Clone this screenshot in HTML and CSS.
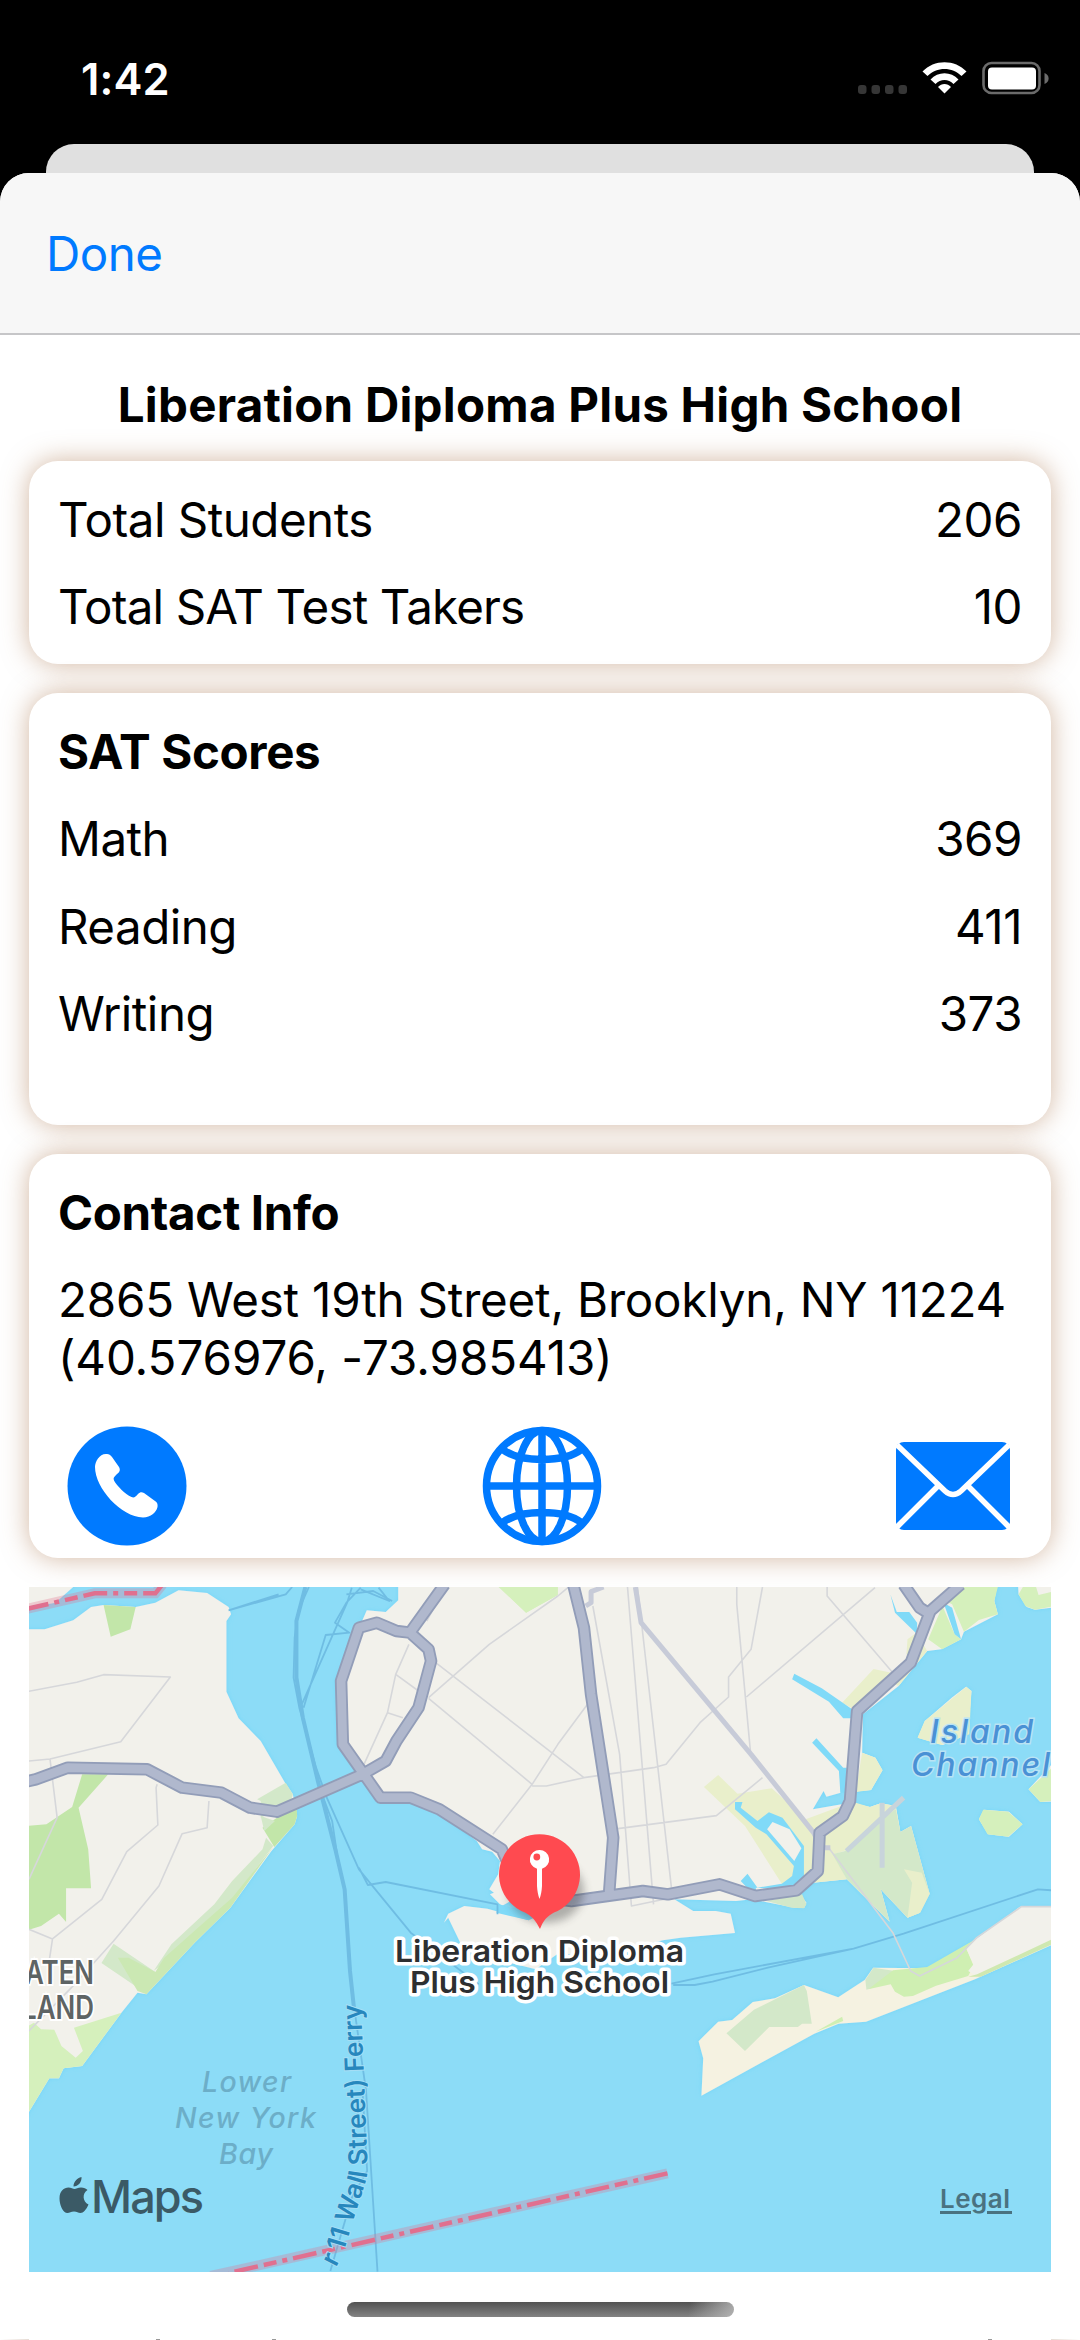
FILE: index.html
```html
<!DOCTYPE html>
<html lang="en">
<head>
<meta charset="utf-8">
<title>Liberation Diploma Plus High School</title>
<link rel="stylesheet" href="styles.css">
</head>
<body>
<div class="screen">
  <header class="status">
    <span class="time">1:42</span>
    <svg class="indicators" width="192" height="36" viewBox="0 0 192 36">
      <g fill="#363636"><rect x="0" y="24" width="8.500" height="9" rx="3"/><rect x="13.500" y="24" width="8.500" height="9" rx="3"/><rect x="27" y="24" width="8.500" height="9" rx="3"/><rect x="40.500" y="24" width="8.500" height="9" rx="3"/></g>
      <g fill="#fff">
        <path d="M64.500 10.500C76-2 97-2 108.500 10.500L103.500 15C94.500 5.500 78.500 5.500 69.500 15Z"/>
        <path d="M72.500 18.500C80 10 93 10 100.500 18.500L95.500 23C90.500 17.500 82.500 17.500 77.500 23Z"/>
        <path d="M80 26C83.500 22 89.500 22 93 26L86.500 32.500Z"/>
      </g>
      <rect x="125.500" y="2" width="56" height="30" rx="8" fill="none" stroke="#6b6b6b" stroke-width="2.600"/>
      <rect x="130" y="6.500" width="48" height="22" rx="4" fill="#fff"/>
      <path d="M186.500 12C192 14 192 21 186.500 23Z" fill="#6b6b6b"/>
    </svg>
  </header>
  <div class="sheet-behind"></div>
  <main class="sheet">
    <nav class="toolbar"><a class="done">Done</a></nav>
    <h1 class="title">Liberation Diploma Plus High School</h1>
    <div class="stack">
      <section class="card">
        <div class="row"><span>Total Students</span><span>206</span></div>
        <div class="row"><span class="takers">Total SAT Test Takers</span><span>10</span></div>
      </section>
      <section class="card scores">
        <h2 class="heading">SAT Scores</h2>
        <div class="row"><span>Math</span><span>369</span></div>
        <div class="row"><span>Reading</span><span>411</span></div>
        <div class="row"><span>Writing</span><span>373</span></div>
      </section>
      <section class="card contact">
        <h2 class="heading">Contact Info</h2>
        <p class="address">2865 West 19th Street, Brooklyn, NY 11224<br><span class="coords">(40.576976, -73.985413)</span></p>
        <div class="actions">
          <svg width="120" height="120" viewBox="0 0 120 120"><circle cx="60" cy="60" r="59.500" fill="#007aff"/><path fill="#fff" d="M40 28C33 27 28 35 28 41C28 62 54 91 76 91.500C84 91 89 87 90.500 81C91 78 90 76 88 75L77 67C74.500 65.500 73 66 71 68C68.500 71 67 72 64.500 71C58 68 50 60 47 54.500C46 52 47 51 49.500 48.500C53 46 53.500 44 52 41L45 31C43.500 29 42 28 40 28Z"/></svg>
          <svg width="120" height="120" viewBox="0 0 120 120" fill="none" stroke="#007aff" stroke-width="7.500"><circle cx="60" cy="60" r="55.500"/><ellipse cx="60" cy="60" rx="25.500" ry="55.500"/><path d="M60 4V116M4 60H116M20 23C38 37 82 37 100 23M20 97C38 83 82 83 100 97"/></svg>
          <svg class="mail" width="114" height="88" viewBox="0 0 114 88"><rect width="114" height="88" rx="8" fill="#007aff"/><path d="M1 3L49 49Q57 56 65 49L113 3M42 44L1 85M72 44L113 85" fill="none" stroke="#fff" stroke-width="5.500"/></svg>
        </div>
      </section>
      <svg class="map" width="1022" height="685" viewBox="29 1586 1022 685">
        <defs>
          <filter id="shore" x="-5%" y="-5%" width="110%" height="110%"><feDropShadow dx="0" dy="0" stdDeviation="7" flood-color="#70d6f8" flood-opacity=".9"/></filter>
          <filter id="soft" x="-30%" y="-30%" width="160%" height="160%"><feGaussianBlur stdDeviation="4"/></filter>
          <path id="ferry" d="M303 2330L343 2253L353 2220L365 2183Q368 2174 367.500 2165L361 2003"/>
        </defs>
        <rect x="29" y="1586" width="1022" height="685" fill="#8cdcf7"/>
        <g transform="translate(0 1570) scale(.35714 .33333)" class="geo">
          <g class="land" filter="url(#shore)">
            <path d="M60 175H125L205 148 255 108 290 102 380 108 435 95 500 58 580 66 640 108 647 130 634 150V362L668 442 730 510 798 635 820 670 832 735 825 760 760 840 645 1010 545 1115 410 1270 385 1265 340 1325 230 1485 178 1492 165 1522H138L60 1660Z"/>
            <path d="M60 30H205V48L155 95 60 115Z"/>
            <path d="M1115 30V88L1080 123 1027 118 1010 160 940 330 945 520 1010 610 1060 690H1150L1230 725 1335 810 1350 835 1378 842 1400 870 1395 910 1370 955 1383 965 1372 970 1405 1005 1430 990 1480 1020 1480 1048 1365 1013 1300 1005 1255 1028 1243 1055 1255 1040 1300 1140 1500 1195 1560 1150 1700 1150 1856 1108 1906 1100 2058 1086 2046 1028 2004 1020H1941L1888 985 2061 990 2106 985 2226 1010H2252L2258 995 2240 970 2276 935 2371 925 2491 1052 2466 955 2541 1040 2576 1025 2603 968 2551 765 2521 783 2508 705 2466 697 2436 708 2381 695 2276 715 2306 660 2314 677 2354 665 2351 600 2366 595 2380 663 2439 657 2471 598 2451 560 2414 545 2416 430 2516 345 2596 240 2636 235 2691 205 2699 182 2794 130 2784 90 2794 30Z"/>
            <path d="M2850 30L2852 70 2875 108 2898 116 2965 107V30ZM2570 500L2590 450 2665 380 2705 347 2720 360 2710 490 2640 522ZM2880 655L2980 540V690L2913 693ZM2755 716L2825 722 2863 760 2825 797 2767 790 2741 745Z"/>
            <path class="beach" d="M1956 1411L2011 1352 2050 1347 2108 1293 2170 1282 2251 1242 2347 1279 2421 1227 2445 1190 2595 1192 2735 1105 2860 1007H2970V1110L2730 1225 2425 1352 2348 1358 2280 1388 1964 1574 1969 1462Z"/>
          </g>
          <g fill="#c2e6a9">
            <path d="M290 102L380 108 365 175 310 197ZM230 610H303L220 710 247 835 255 952H185V1053L165 1028 115 1065 70 1080V765L130 760 202 708ZM735 770L830 700 832 735 825 760 768 828Z"/>
          </g>
          <g fill="#d3e8c9"><path d="M720 685L800 635 820 670 812 700 730 740V690M730 735L770 750 740 780M745 800L765 825 640 1000 540 1110 430 1200 480 1120 600 1000 650 930 735 835ZM318 1118L435 1203 411 1268 284 1176Z"/></g>
          <path fill="#cbe8b3" d="M765 828L645 1010 545 1115 410 1270 385 1260 330 1160 360 1160 435 1203 460 1160 560 1065 650 980Z"/>
          <path fill="#d5f0bc" d="M70 1370L95 1355 115 1375 152 1376 172 1425 212 1460 232 1440 207 1370 340 1325 230 1485 178 1492 165 1522H138L60 1660ZM1398 48H1562V72L1473 125Z"/>
          <g transform="translate(1456 0)">
            <path fill="#d5f0bc" d="M-60 48H105V72L17 125ZM1190 90L1240 48H1338L1328 90 1338 130 1285 147 1243 182 1210 100ZM1183 105L1217 190 1235 205 1182 235 1143 205ZM1396 70L1408 48H1445L1452 72 1490 62V107L1442 116 1415 105ZM1297 716L1367 722 1407 760 1367 797 1309 790 1285 745ZM1424 655L1490 590V690L1457 693Z"/>
            <path fill="#e9efcb" d="M990 294L1040 305 930 412 902 395ZM1110 185L1140 240 1060 345 1050 340 1100 270 1082 250 1085 205ZM958 545L995 560 1015 598 983 657 940 663ZM1113 500L1133 450 1250 347 1264 360 1258 490 1180 522ZM555 612L609 668 705 652 800 745 900 705 940 695 980 708 1010 697 1052 705 1065 783 880 850 915 925 820 935 733 938 630 765 515 648Z"/>
            <path fill="#d3e8c9" d="M875 850L910 840 1020 740 1052 715 1065 783 1095 765 1147 968 1120 1025 1085 1040 1010 955 1035 1052 915 925ZM690 990L790 970 802 1000 795 1012 760 1010Z"/>
            <path fill="#e9efcb" d="M1075 895L1125 905 1147 968 1120 1025 1085 1040 1098 935Z"/>
            <path fill="#80daf8" d="M1037 70L1055 123H1090L1112 155V190L1050 125ZM768 308L845 352 930 415V442H905L865 392 762 325ZM830 502L905 590H915V665H897L893 600 818 515ZM602 693H623L618 710 665 750 697 724 735 740 795 825V915L770 960 660 950 665 983 618 930 637 908 665 950 733 938 762 915 767 885 690 790 660 770 602 715ZM1186 95L1210 110 1235 205 1217 190Z"/>
            <path fill="#f2f1eb" d="M707 753L755 775 788 832 768 870 692 775Z"/>
            <g fill="#d3e8c9"><path d="M578 1387L655 1316 795 1242 803 1260 817 1358H790L778 1368H698L630 1440Z"/><path d="M967 1226L990 1190 1050 1200 1045 1230 970 1256Z"/></g>
            <path fill="#cfefb2" d="M1045 1198L1140 1188 1278 1103 1278 1110 1250 1133 1270 1184 1255 1215 1165 1244 1100 1275 1075 1277 1050 1262 1038 1240 975 1255ZM828 1382L902 1337 905 1350Z"/>
            <path fill="#f2f1eb" d="M1278 1103L1400 1007H1490V1112L1280 1216 1255 1200 1270 1180 1250 1133Z"/>
            <path fill="#cfe8b0" d="M1255 1217L1280 1210 1490 1105V1120L1290 1217Z"/>
          </g>
          <path fill="#80daf8" d="M1398 1000L1440 1012 1480 1030 1560 1000V1010L1480 1048 1390 1025Z"/>
          <g class="ferry">
            <path d="M640 118L800 70 818 48M640 118L780 70M848 440L890 630 940 840 965 955 985 1260 1025 1560 1057 2102M865 48L835 120 825 200 822 320 838 410 885 590 915 680 1005 895 1150 1085 1340 1240M985 50L972 95 845 400M1010 50L970 95 938 155 978 185 912 192 850 410M1010 55L1090 90 1060 50M970 70L1045 60 1098 90M905 680L930 750 948 880M1005 890L1030 942 1080 933 1393 1000V1030M925 2100L985 1880 1028 1800 1015 1560"/>
            <path class="wide" d="M855 48L830 150V320L848 440 890 630 940 840 965 955 980 1200 992 1320"/>
            <path d="M1880 1238L2000 1210 2390 1133 2530 1088 2906 955 2945 958M1885 1242H1945L1995 1232 2150 1190 2390 1133"/>
          </g>
          <g class="minor">
            <path d="M81 361L215 334 290 311 477 318 338 512 140 564 81 570M140 564L160 740 81 925M440 640L437 650 442 762 355 842 285 985 147 1104 81 1075M147 1104L135 1190M585 690L580 770 510 788 445 945 318 1110 200 1250 81 1380M1225 90L1195 150M1145 220L1108 310 1085 425 1015 590M1108 310L1172 360M1085 425L1128 440M1200 380L1370 220 1562 75 1590 50M1220 275L1635 620 1830 590 1865 580 1960 455 2040 378V318L2103 235 2135 48M1200 382L1490 640 1380 790M1490 645H1530L1635 620M1490 640L1562 520 1645 400M1757 48L1830 1000M1660 105L1735 550 1768 1005 1880 980M1785 48L1880 950M2063 48V100L2102 550M2090 378L2450 50M2316 48V75L2500 305M1730 773L2006 734 2135 620M2320 830L2500 1085 2550 1200 2575 1215 2680 1160 2735 1100 2860 1007H2943"/>
          </g>
          <path class="thin" d="M1640 105L1655 95V62L1690 48M1779 48L1795 155 2103 550 2278 785 2300 830 2325 830"/>
          <path fill="none" stroke="#c8d4db" stroke-width="5" d="M2470 695V890M2530 680L2370 840"/>
          <g class="road casing">
            <path d="M60 635L100 625 190 590 412 595 510 650 620 665 700 710 775 722 1015 610 1080 570 1110 510 1172 410 1207 270 1200 235 1148 185 1110 180 1055 155 1005 170 955 330 960 520 1065 680H1150L1230 715 1405 835 1460 970 1600 990 1800 960 1870 970 2015 940 2115 975 2230 958 2290 900 2295 785 2360 735 2380 690 2400 420 2550 275 2605 120 2690 40M1148 185L1245 40M1605 40L1635 170 1655 370 1717 800 1705 975M2530 40L2575 110 2605 130"/>
          </g>
          <g class="road fill"><path d="M60 635L100 625 190 590 412 595 510 650 620 665 700 710 775 722 1015 610 1080 570 1110 510 1172 410 1207 270 1200 235 1148 185 1110 180 1055 155 1005 170 955 330 960 520 1065 680H1150L1230 715 1405 835 1460 970 1600 990 1800 960 1870 970 2015 940 2115 975 2230 958 2290 900 2295 785 2360 735 2380 690 2400 420 2550 275 2605 120 2690 40M1148 185L1245 40M1605 40L1635 170 1655 370 1717 800 1705 975M2530 40L2575 110 2605 130"/></g>
          <g fill="none" stroke="#e0708f">
            <path stroke-opacity=".3" stroke-width="10" d="M70 115L265 67H435L455 40M590 2115L1869 1807"/>
            <path stroke-width="4.500" stroke-dasharray="24 6 5 6 13 6" d="M70 115L265 67H435L455 40M1869 1807L640 2106"/>
          </g>
        </g>
        <g class="water-name strong">
          <text x="930" y="1742" textLength="103">Island</text>
          <text x="911" y="1775" textLength="139">Channel</text>
        </g>
        <g class="district">
          <text x="25" y="1983" textLength="69" lengthAdjust="spacingAndGlyphs">ATEN</text>
          <text x="22" y="2018" textLength="72" lengthAdjust="spacingAndGlyphs">LAND</text>
        </g>
        <g class="water-name faint">
          <text x="202" y="2091" textLength="89">Lower</text>
          <text x="175" y="2127" textLength="141">New York</text>
          <text x="219" y="2163" textLength="54">Bay</text>
        </g>
        <text class="ferry-name"><textPath href="#ferry" startOffset="100%" text-anchor="end">r 11 Wall Street) Ferry</textPath></text>
        <ellipse cx="546" cy="1890" rx="38" ry="32" fill="#333" opacity=".35" filter="url(#soft)"/>
        <path fill="#ff4a50" d="M540 1928C536 1920 532 1915 525 1911.500A40.500 40.500 0 1 1 554 1911.500C547 1915 543 1920 540 1928Z"/>
        <path fill="#fff" d="M539.500 1849a9.500 9.500 0 0 1 2.500 18.700V1885Q541.500 1893 539.500 1898Q537.500 1893 537 1885V1867.700A9.500 9.500 0 0 1 539.500 1849Z"/>
        <circle cx="536.800" cy="1856" r="3.400" fill="#ff4a50"/>
        <g class="place">
          <text x="395" y="1960.500" textLength="289" lengthAdjust="spacingAndGlyphs">Liberation Diploma</text>
          <text x="410" y="1992" textLength="259" lengthAdjust="spacingAndGlyphs">Plus High School</text>
        </g>
        <path fill="#3b5a66" d="M81.500 2176C82 2181 78 2185.500 73.500 2185.500C73.500 2181 77 2177 81.500 2176ZM87.500 2189C82 2192.500 82.500 2200.500 88.500 2203.500C86 2209 83.500 2212 80.500 2212C78 2212 77 2210.500 74 2210.500C71 2210.500 69.500 2212 67.500 2212C63 2212 59.500 2204 59.500 2197.500C59.500 2190 64 2186.500 68.500 2186.500C71 2186.500 73 2188 74.500 2188C76 2188 78 2186.500 81 2186.500C84 2186.500 86 2187.500 87.500 2189Z"/>
        <text class="maps" x="91" y="2212" textLength="113">Maps</text>
        <text class="legal" x="940" y="2207" textLength="70">Legal</text>
        <path d="M940 2211.500H971M987 2211.500H1012" stroke="#4a7280" stroke-width="2.800"/>
      </svg>
    </div>
  </main>
  <div class="next-card-edge"></div>
  <div class="home-indicator"></div>
</div>
</body>
</html>
```
FILE: styles.css
```css
* { box-sizing: border-box; margin: 0; padding: 0; }
body { background: #000; font-family: Inter, "Noto Sans", sans-serif; color: #000; }
.screen { position: relative; width: 1080px; height: 2340px; overflow: hidden; background: #000; }
.status { display: flex; justify-content: space-between; height: 144px; padding: 61px 30px 0 81px; color: #fff; }
.time { font-size: 43.5px; font-weight: 600; line-height: 36px; letter-spacing: 0.1px; }
.indicators { display: block; }
.sheet-behind { height: 29px; margin: 0 46px; border-radius: 28px 28px 0 0; background: #e0e0e0; }
.sheet { position: relative; height: 2167px; background: #fff; border-radius: 29px 29px 0 0; overflow: hidden; }
.toolbar { height: 162px; padding: 51px 46px 0; background: #f7f7f7; border-bottom: 2px solid #c6c6c8; }
.done { font-size: 47.5px; line-height: 60px; color: #007aff; letter-spacing: -0.5px; }
.title { height: 126px; padding-top: 41px; font-size: 47.5px; font-weight: 700; line-height: 58px; text-align: center; letter-spacing: 0.25px; white-space: nowrap; }
.stack { display: flex; flex-direction: column; gap: 29px; padding: 0 29px; }
.card { display: flex; flex-direction: column; gap: 29.4px; height: 203px; padding: 30px 29px 0 29px; border-radius: 29px; background: #fff; box-shadow: 0 0 27px rgba(165, 110, 65, .5); font-size: 47.5px; line-height: 58px; letter-spacing: -0.5px; white-space: nowrap; }
.takers { letter-spacing: -0.85px; }
.scores { height: 432px; }
.contact { height: 404px; }
.row { display: flex; justify-content: space-between; }
.heading { font-size: 47.5px; font-weight: 700; line-height: 58px; letter-spacing: -0.35px; }
.address { letter-spacing: -0.2px; }
.coords { letter-spacing: -0.05px; }
.actions { display: flex; justify-content: space-between; align-items: center; padding: 9px 12px 0 9px; }
.map { display: block; }
.land { fill: #f2f1eb; }
.beach { fill: #f5f2e1; }
.geo path { vector-effect: non-scaling-stroke; }
.ferry, .minor, .thin, .road { fill: none; stroke-linejoin: round; }
.ferry { stroke: #6fbde3; stroke-width: 1.8; }
.wide { stroke-width: 4; }
.minor { stroke: #d6d7da; stroke-width: 1.6; }
.thin { stroke: #c7cbd8; stroke-width: 5; }
.casing { stroke: #929db8; stroke-width: 12.5; }
.fill { stroke: #b0b8cd; stroke-width: 8.8; }
.water-name { font-style: italic; }
.strong { font-size: 32px; font-weight: 500; fill: #4a91d5; stroke: #b9e3f4; stroke-width: 3; paint-order: stroke; }
.faint { font-size: 28.5px; font-weight: 500; fill: #6caec8; }
.district { font-size: 33px; font-weight: 600; fill: #5e6464; stroke: #fff; stroke-width: 4; paint-order: stroke; }
.ferry-name { font-size: 26px; font-weight: 600; letter-spacing: 0.2px; fill: #2787bd; stroke: #a5def5; stroke-width: 2; paint-order: stroke; }
.place { font-size: 30.5px; font-weight: 600; fill: #2d2f31; stroke: #fff; stroke-width: 7; stroke-linejoin: round; paint-order: stroke; }
.maps { font-size: 45px; font-weight: 500; fill: #3b5a66; }
.legal { font-size: 26px; font-weight: 600; fill: #4a7280; }
.next-card-edge {
  position: absolute; left: 0; top: 2339px; width: 1080px; height: 1px;
  background:
    linear-gradient(#999, #999) 156px 0 / 4px 1px no-repeat,
    linear-gradient(#999, #999) 272px 0 / 4px 1px no-repeat,
    linear-gradient(#999, #999) 988px 0 / 4px 1px no-repeat,
    linear-gradient(90deg, #fff, #e6dbd4) 0 0 / 29px 1px no-repeat,
    linear-gradient(90deg, #e6dbd4, #fff) 1051px 0 / 29px 1px no-repeat;
}
.home-indicator { position: absolute; left: 347px; top: 2302px; width: 387px; height: 15px; border-radius: 8px; background: linear-gradient(100deg, transparent 88%, rgba(190, 190, 190, .8)), linear-gradient(#525252, #838383); }
```
